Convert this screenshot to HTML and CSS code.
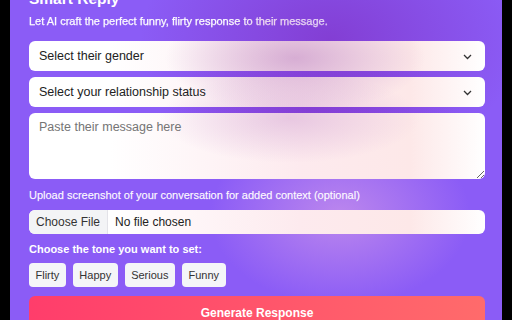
FILE: index.html
```html
<!DOCTYPE html>
<html lang="en">
<head>
  <meta charset="UTF-8">
  <title>Smart Reply</title>
  <meta name="viewport" content="width=device-width,initial-scale=1">
  <link rel="stylesheet" href="styles.css">
</head>
<body>
  <main class="panel">
    <h1>Smart Reply</h1>
    <p class="lead">Let AI craft the perfect funny, flirty response to their message.</p>

    <label class="select-wrap">
      <select class="field">
        <option>Select their gender</option>
        <option>Male</option>
        <option>Female</option>
      </select>
      <svg class="chevron" width="9" height="6" viewBox="0 0 9 6"><path d="M1 1l3.5 3.5L8 1" fill="none" stroke="#333" stroke-width="1.3"/></svg>
    </label>

    <label class="select-wrap">
      <select class="field">
        <option>Select your relationship status</option>
        <option>Single</option>
        <option>Dating</option>
      </select>
      <svg class="chevron" width="9" height="6" viewBox="0 0 9 6"><path d="M1 1l3.5 3.5L8 1" fill="none" stroke="#333" stroke-width="1.3"/></svg>
    </label>

    <textarea class="field message" placeholder="Paste their message here"></textarea>

    <p class="label">Upload screenshot of your conversation for added context (optional)</p>
    <input class="field file" type="file">

    <p class="label tone-title">Choose the tone you want to set:</p>
    <div class="tones">
      <button>Flirty</button>
      <button>Happy</button>
      <button>Serious</button>
      <button>Funny</button>
    </div>

    <button class="generate">Generate Response</button>
  </main>
</body>
</html>
```

FILE: styles.css
```css
*{margin:0;padding:0;box-sizing:border-box}
html,body{height:100%}
body{background:#000;font-family:"Liberation Sans",Arial,sans-serif;color:#222;overflow:hidden}
.panel{margin:0 10px;height:100%;padding:0 17px 0 19px;display:flex;flex-direction:column;color:#fff;
  background:
    radial-gradient(ellipse 130px 90px at 330px 215px,rgba(196,142,236,.85),rgba(196,142,236,0) 100%),
    radial-gradient(ellipse 190px 130px at 320px 40px,rgba(128,52,200,.75),rgba(128,52,200,0) 100%),
    radial-gradient(ellipse 150px 60px at 300px 110px,rgba(130,50,200,.6),rgba(130,50,200,0) 100%),
    #8b5cf6}
.panel > *{flex-shrink:0}
h1{font-size:15.5px;line-height:24px;margin-top:-13px;font-weight:bold}
.lead{font-size:11px;line-height:14px;margin:3px 0 13px;
  background:linear-gradient(90deg,#fff 0,#fff 200px,#ecd0ec 240px,#dcc7f2 300px);
  -webkit-background-clip:text;background-clip:text;color:transparent;width:max-content;
  -webkit-text-stroke:.25px rgba(255,255,255,.5)}
.field{display:block;width:100%;border:none;border-radius:6px;font-family:inherit;color:#222;outline:none;
  background:
    radial-gradient(ellipse 130px 55px at 295px 58px,rgba(205,158,205,.8),rgba(205,158,205,0) 100%),
    radial-gradient(ellipse 130px 45px at 290px 118px,rgba(214,170,214,.55),rgba(214,170,214,0) 100%),
    linear-gradient(90deg,#fff 0,#fff 110px,#fdeaee 300px,#fde8e8 410px,#fff 485px);
  background-attachment:fixed}
.select-wrap{position:relative;display:block;margin-bottom:6px}
select.field{appearance:none;-webkit-appearance:none;height:30px;padding:0 10px;font-size:12.5px}
.chevron{position:absolute;right:13px;top:13px;pointer-events:none}
.message{height:66px;padding:7px 10px;font-size:12.5px;resize:vertical}
.message::placeholder{color:#757575}
.label{font-size:11px;line-height:14px;margin-top:9px;color:#fdf7ff;-webkit-text-stroke:.25px rgba(255,255,255,.6)}
.file{height:24px;margin-top:8px;font-size:12px;color:#222;padding:0;overflow:hidden}
.file::file-selector-button{height:24px;margin-right:7px;padding:0 7px;border:none;border-right:1px solid #e3e3e8;
  background:#f3f4f6;color:#333;font-family:inherit;font-size:12px}
.tone-title{margin-top:8px;color:#fff;font-weight:bold;-webkit-text-stroke:0}
.tones{display:flex;gap:7px;margin-top:7px}
.tones button{height:24px;padding:0 6.5px;border:none;border-radius:4px;background:#f4f5f8;color:#333;
  font-family:inherit;font-size:11px}
.generate{margin-top:9px;height:34px;border:none;border-radius:6px;color:#fff;font-family:inherit;
  font-size:12px;font-weight:bold;background:linear-gradient(90deg,#ff3d6b,#ff6b6b)}
```
